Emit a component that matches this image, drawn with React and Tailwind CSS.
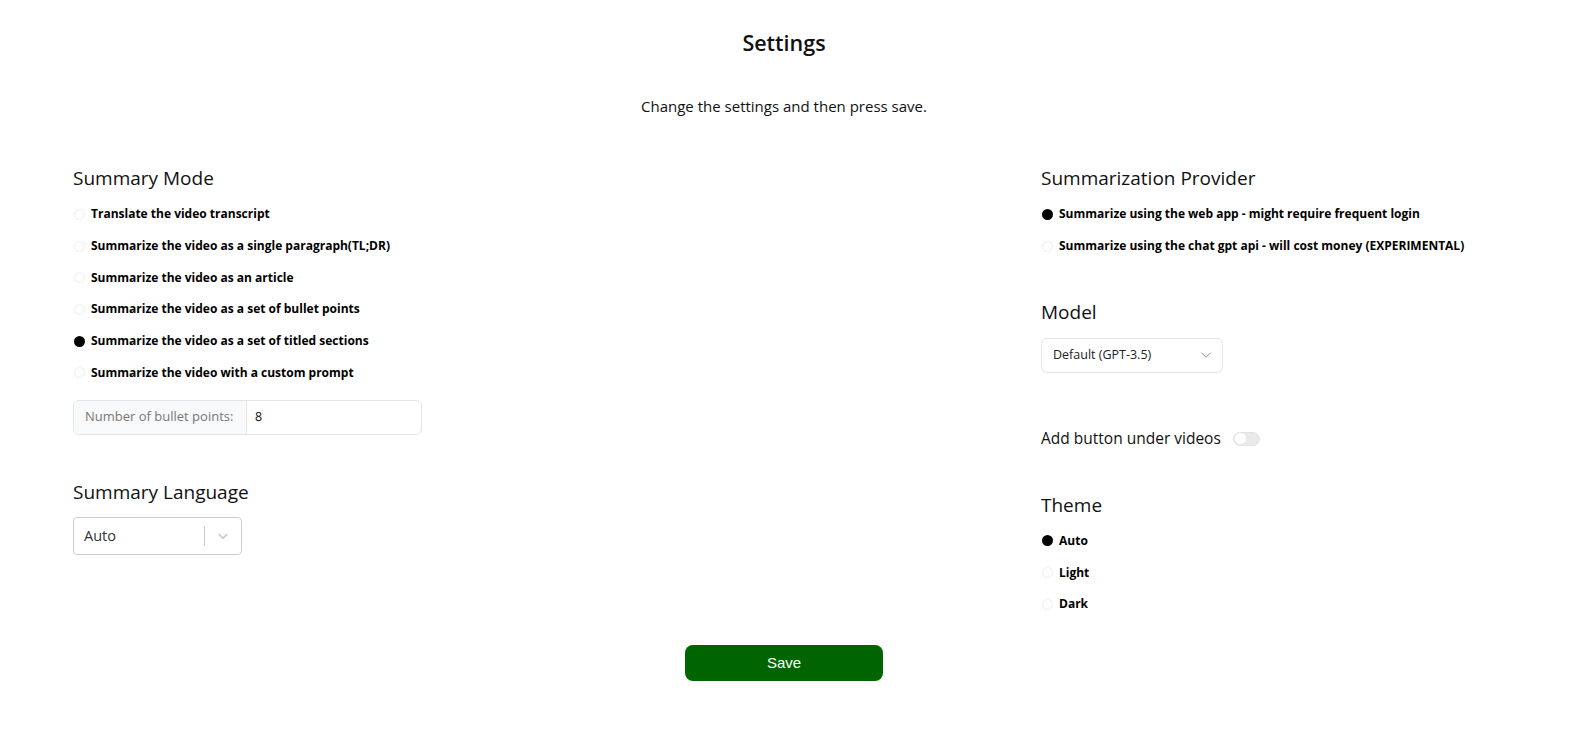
import React, { useState } from 'react';

const font = { fontFamily: '"Open Sans", "Noto Sans", sans-serif' };

const modes = [
  'Translate the video transcript',
  'Summarize the video as a single paragraph(TL;DR)',
  'Summarize the video as an article',
  'Summarize the video as a set of bullet points',
  'Summarize the video as a set of titled sections',
  'Summarize the video with a custom prompt',
];

const providers = [
  'Summarize using the web app - might require frequent login',
  'Summarize using the chat gpt api - will cost money (EXPERIMENTAL)',
];

const themes = ['Auto', 'Light', 'Dark'];

// one radio row, circle + bold label
const Radio = ({ label, checked, onClick }) => (
  <label className="flex items-center h-[31.7px] cursor-pointer" onClick={onClick}>
    <span
      className={
        'w-[11px] h-[11px] rounded-full ml-[1px] mr-[6px] shrink-0 ' +
        (checked ? 'bg-black' : 'border border-[#ececec] bg-white')
      }
    />
    <span className="text-[12px] font-bold text-black">{label}</span>
  </label>
);

const Heading = ({ children }) => (
  <h3 className="text-[19px] text-[#111] leading-none">{children}</h3>
);

export default function App() {
  const [mode, setMode] = useState(4);
  const [provider, setProvider] = useState(0);
  const [theme, setTheme] = useState(0);
  const [bullets, setBullets] = useState('8');
  const [addButton, setAddButton] = useState(false);

  return (
    <div className="min-h-screen bg-white text-[#111] pr-[15px]" style={font}>
      <div className="flex flex-col items-center pt-[32px]">
        <h1 className="text-[21.5px] font-semibold leading-none">Settings</h1>
        <p className="text-[15px] mt-[45px] leading-none">Change the settings and then press save.</p>
      </div>

      <div className="flex justify-between pl-[73px] pr-[73px] mt-[55px]">
        {/* left column */}
        <div className="w-[420px]">
          <Heading>Summary Mode</Heading>
          <div className="mt-[11px]">
            {modes.map((m, i) => (
              <Radio key={m} label={m} checked={mode === i} onClick={() => setMode(i)} />
            ))}
          </div>
          <div className="flex w-[349px] h-[35px] mt-[11px] border border-[#e3e5e8] rounded-[6px] overflow-hidden">
            <span className="flex items-center w-[174px] pl-[11px] bg-[#f8f9fa] border-r border-[#e3e5e8] text-[13px] text-[#777]">
              Number of bullet points:
            </span>
            <input
              className="flex-1 px-[8px] text-[12.5px] text-[#111] outline-none"
              value={bullets}
              onChange={(e) => setBullets(e.target.value)}
            />
          </div>

          <div className="mt-[48px]">
            <Heading>Summary Language</Heading>
          </div>
          <div className="flex items-center w-[169px] h-[38px] mt-[15px] border border-[#cccccc] rounded-[4px]">
            <span className="flex-1 pl-[10px] text-[14.5px] text-[#333]">Auto</span>
            <span className="w-px h-[20px] bg-[#cccccc]" />
            <span className="w-[36px] flex justify-center text-[#cccccc]">
              <svg width="16" height="16" viewBox="0 0 20 20" fill="currentColor">
                <path d="M4.516 7.548c0.436-0.446 1.043-0.481 1.576 0l3.908 3.747 3.908-3.747c0.533-0.481 1.141-0.446 1.574 0 0.436 0.445 0.408 1.197 0 1.615-0.406 0.418-4.695 4.502-4.695 4.502-0.217 0.223-0.502 0.335-0.787 0.335s-0.57-0.112-0.789-0.335c0 0-4.287-4.084-4.695-4.502s-0.436-1.17 0-1.615z" />
              </svg>
            </span>
          </div>
        </div>

        {/* right column */}
        <div className="w-[454px]">
          <Heading>Summarization Provider</Heading>
          <div className="mt-[11px]">
            {providers.map((p, i) => (
              <Radio key={p} label={p} checked={provider === i} onClick={() => setProvider(i)} />
            ))}
          </div>

          <div className="mt-[41px]">
            <Heading>Model</Heading>
          </div>
          <div className="flex items-center justify-between w-[182px] h-[35px] mt-[16px] border border-[#e3e5e8] rounded-[6px] pl-[11px] pr-[10px]">
            <span className="text-[12.5px] text-[#222]">Default (GPT-3.5)</span>
            <svg width="12" height="12" viewBox="0 0 16 16" fill="none" stroke="#8a8f96" strokeWidth="1.3">
              <path d="M2 5l6 6 6-6" />
            </svg>
          </div>

          <div className="flex items-center mt-[54px]">
            <span className="text-[15.5px] text-[#111]">Add button under videos</span>
            <button
              className={
                'ml-[12px] w-[27px] h-[14px] rounded-full border border-[#e3e3e3] flex items-center px-[1px] ' +
                (addButton ? 'bg-[#006400] justify-end' : 'bg-[#e9e9e9] justify-start')
              }
              onClick={() => setAddButton(!addButton)}
            >
              <span className="w-[11px] h-[11px] rounded-full bg-white" />
            </button>
          </div>

          <div className="mt-[46px]">
            <Heading>Theme</Heading>
          </div>
          <div className="mt-[10px]">
            {themes.map((t, i) => (
              <Radio key={t} label={t} checked={theme === i} onClick={() => setTheme(i)} />
            ))}
          </div>
        </div>
      </div>

      <div className="flex justify-center mt-[25px]">
        <button
          className="w-[198px] h-[36px] rounded-[8px] bg-[#006400] text-white text-[15px]"
          style={{ fontFamily: '"Liberation Sans", Arial, sans-serif' }}
        >
          Save
        </button>
      </div>
    </div>
  );
}
